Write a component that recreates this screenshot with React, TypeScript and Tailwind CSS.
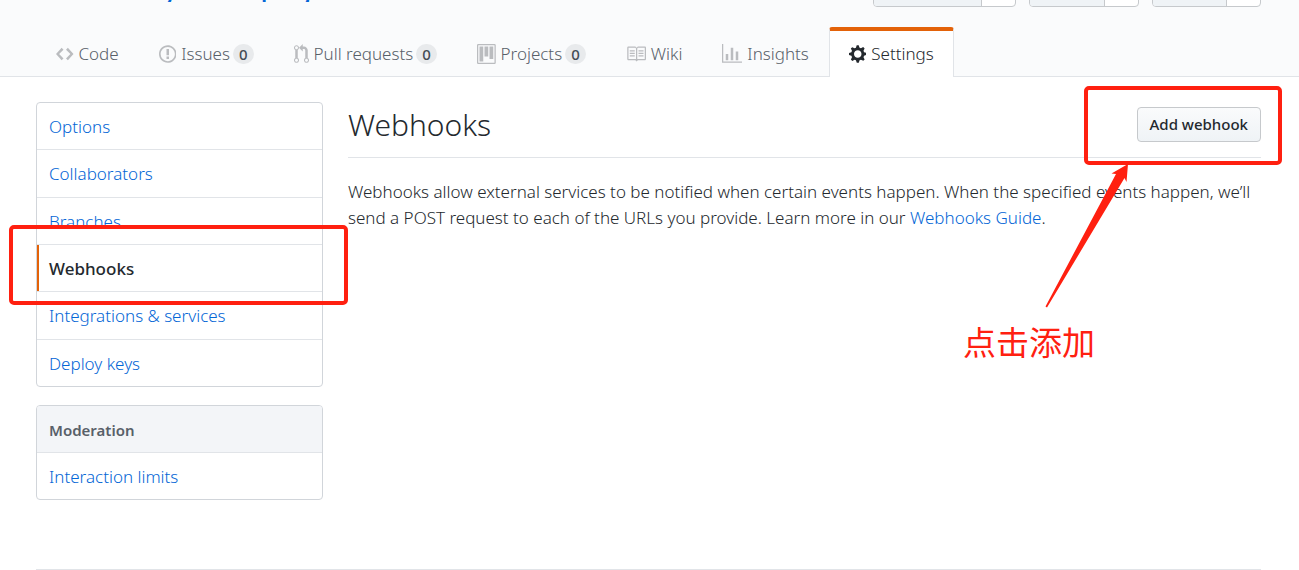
import clsx from "clsx";

const icons = {
  code: {
    width: 14,
    path: "M9.5 3L8 4.5 11.5 8 8 11.5 9.5 13 14 8 9.5 3zm-5 0L0 8l4.5 5L6 11.5 2.5 8 6 4.5 4.5 3z",
  },
  issue: {
    width: 14,
    path: "M7 2.3c3.14 0 5.7 2.56 5.7 5.7s-2.56 5.7-5.7 5.7A5.71 5.71 0 0 1 1.3 8c0-3.14 2.56-5.7 5.7-5.7zM7 1C3.14 1 0 4.14 0 8s3.14 7 7 7 7-3.14 7-7-3.14-7-7-7zm1 3H6v5h2V4zm0 6H6v2h2v-2z",
  },
  pull: {
    width: 12,
    path: "M11 11.28V5c-.03-.78-.34-1.47-.94-2.06C9.46 2.35 8.78 2.03 8 2H7V0L4 3l3 3V4h1c.27.02.48.11.69.31.21.2.3.42.31.69v6.28A1.993 1.993 0 0 0 10 15a1.993 1.993 0 0 0 1-3.72zm-1 2.92c-.66 0-1.2-.55-1.2-1.2 0-.65.55-1.2 1.2-1.2.65 0 1.2.55 1.2 1.2 0 .65-.55 1.2-1.2 1.2zM4 3c0-1.11-.89-2-2-2a1.993 1.993 0 0 0-1 3.72v6.56A1.993 1.993 0 0 0 2 15a1.993 1.993 0 0 0 1-3.72V4.72c.59-.34 1-.98 1-1.72zm-.8 10c0 .66-.55 1.2-1.2 1.2-.65 0-1.2-.55-1.2-1.2 0-.65.55-1.2 1.2-1.2.65 0 1.2.55 1.2 1.2zM2 4.2C1.34 4.2.8 3.65.8 3c0-.65.55-1.2 1.2-1.2.65 0 1.2.55 1.2 1.2 0 .65-.55 1.2-1.2 1.2z",
  },
  project: {
    width: 15,
    path: "M10 12h3V2h-3v10zm-4-2h3V2H6v8zm-4 4h3V2H2v12zm-1 1h13V1H1v14zM14 0H1a1 1 0 0 0-1 1v14a1 1 0 0 0 1 1h13a1 1 0 0 0 1-1V1a1 1 0 0 0-1-1z",
  },
  book: {
    width: 16,
    path: "M3 5h4v1H3V5zm0 3h4V7H3v1zm0 2h4V9H3v1zm11-5h-4v1h4V5zm0 2h-4v1h4V7zm0 2h-4v1h4V9zm2-6v9c0 .55-.45 1-1 1H9.5l-1 1-1-1H2c-.55 0-1-.45-1-1V3c0-.55.45-1 1-1h5.5l1 1 1-1H15c.55 0 1 .45 1 1zm-8 .5L7.5 3H2v9h6V3.5zm7-.5H9.5l-.5.5V12h6V3z",
  },
  graph: {
    width: 16,
    path: "M16 14v1H0V0h1v14h15zM5 13H3V8h2v5zm4 0H7V3h2v10zm4 0h-2V6h2v7z",
  },
  gear: {
    width: 14,
    path: "M14 8.77v-1.6l-1.94-.64-.45-1.09.88-1.84-1.13-1.13-1.81.91-1.09-.45-.69-1.92h-1.6l-.63 1.94-1.11.45-1.84-.88-1.13 1.13.91 1.81-.45 1.09L0 7.23v1.59l1.94.64.45 1.09-.88 1.84 1.13 1.13 1.81-.91 1.09.45.69 1.92h1.59l.63-1.94 1.11-.45 1.84.88 1.13-1.13-.92-1.81.47-1.09L14 8.75v.02zM7 11c-1.66 0-3-1.34-3-3s1.34-3 3-3 3 1.34 3 3-1.34 3-3 3z",
  },
};

type IconName = keyof typeof icons;

const tabs: { icon: IconName; text: string; count?: number; selected?: boolean }[] = [
  { icon: "code", text: "Code" },
  { icon: "issue", text: "Issues", count: 0 },
  { icon: "pull", text: "Pull requests", count: 0 },
  { icon: "project", text: "Projects", count: 0 },
  { icon: "book", text: "Wiki" },
  { icon: "graph", text: "Insights" },
  { icon: "gear", text: "Settings", selected: true },
];

const settings = [
  "Options",
  "Collaborators",
  "Branches",
  "Webhooks",
  "Integrations & services",
  "Deploy keys",
];

const Icon = ({ name, className }: { name: IconName; className?: string }) => (
  <svg
    viewBox={`0 0 ${icons[name].width} 16`}
    className={clsx("h-5 w-auto shrink-0 fill-current", className)}
    aria-hidden="true"
  >
    <path fillRule="evenodd" d={icons[name].path} />
  </svg>
);

const SocialButton = ({ label }: { label: string }) => (
  <div className="flex h-[34px] rounded-[4px] border border-[#c6c9cc] bg-white">
    <div className={clsx("rounded-l-[3px] border-r border-[#c6c9cc] bg-[#eff3f6]", label)} />
    <div className="w-[33px]" />
  </div>
);

const Header = () => (
  <header className="border-b border-[#e1e4e8] bg-[#fafbfc] pr-[38px] pl-9">
    <div className="flex h-[27px] items-start justify-between">
      <a
        href="#"
        className="ml-32 flex h-[2px] items-end overflow-hidden text-[22px] leading-[22px] font-semibold text-[#0366d6]"
      >
        <span className="w-[97px]">y</span>
        <span className="w-9">p</span>
        <span>g</span>
      </a>
      <div className="flex h-[7px] items-end gap-[13px]">
        <SocialButton label="w-[108px]" />
        <SocialButton label="w-[75px]" />
        <SocialButton label="w-[74px]" />
      </div>
    </div>
    <nav className="-mb-px flex h-[50px]">
      {tabs.map((tab) => (
        <a
          href="#"
          key={tab.text}
          className={clsx(
            "flex items-center rounded-t-[3px] border-x border-t-4 px-[19px] whitespace-nowrap",
            tab.selected
              ? "border-x-[#e1e4e8] border-t-[#e36209] bg-white text-[#24292e]"
              : "border-transparent text-[#586069]"
          )}
        >
          <Icon name={tab.icon} className={clsx("mr-[5px]", !tab.selected && "text-[#babcbf]")} />
          {tab.text}
          {tab.count !== undefined && (
            <span className="ml-[3px] rounded-full bg-[#e8eaec] px-[6px] text-[15px] leading-5 font-medium text-[#444d56]">
              {tab.count}
            </span>
          )}
        </a>
      ))}
    </nav>
  </header>
);

const Sidebar = () => (
  <aside className="w-[287px] shrink-0">
    <nav className="flex min-h-[285px] flex-col divide-y divide-[#e1e4e8] rounded-[4px] border border-[#d1d5da]">
      {settings.map((item) => (
        <a
          href="#"
          key={item}
          className={clsx(
            "relative flex flex-1 items-center px-3 pt-[2px]",
            item === "Webhooks" ? "font-medium text-[#24292e]" : "text-[#0366d6]"
          )}
        >
          {item}
          {item === "Webhooks" && (
            <>
              <span className="absolute inset-y-0 left-0 w-[2px] bg-[#e36209]" />
              <span className="absolute -top-5 -right-[26px] -bottom-[14px] -left-7 z-10 rounded-[5px] border-4 border-[#ff2010]" />
            </>
          )}
        </a>
      ))}
    </nav>
    <nav className="mt-[18px] rounded-[4px] border border-[#d1d5da]">
      <h3 className="rounded-t-[3px] border-b border-[#e1e4e8] bg-[#f3f5f8] px-3 pt-[11px] pb-[9px] text-[15px] leading-[26px] font-semibold text-[#586069]">
        Moderation
      </h3>
      <a href="#" className="block px-3 pt-[11px] pb-[9px] leading-[26px] text-[#0366d6]">
        Interaction limits
      </a>
    </nav>
  </aside>
);

const AddWebhook = () => (
  <div className="relative">
    <button className="block h-[35px] rounded-[4px] border border-[#c6c9cc] bg-linear-to-b from-[#fafbfc] to-[#eff3f6] px-3 pb-[1px] text-[15px] font-medium">
      Add webhook
    </button>
    <span className="pointer-events-none absolute -top-[21px] -right-[21px] -bottom-[23px] -left-[53px] rounded-[5px] border-4 border-[#ff2010]" />
    <svg
      viewBox="0 0 86 146"
      className="pointer-events-none absolute top-14 right-[131px] h-[146px] w-[86px] fill-[#ff2010]"
      aria-hidden="true"
    >
      <path d="M84 1L67.5 10.5L72 11L1.5 143.5L3 144.5L80.5 15L82.5 19Z" />
    </svg>
    <p className="absolute top-[210px] right-[166px] font-['Noto_Sans_CJK_SC',sans-serif] text-[33px] leading-[48px] font-normal whitespace-nowrap text-[#ff2010]">
      点击添加
    </p>
  </div>
);

const App = () => {
  return (
    <div className="bg-white font-['Noto_Sans',sans-serif] text-[17px] leading-[26px] font-[350] text-[#24292e]">
      <Header />
      <main className="mr-[38px] ml-9 flex gap-[25px] border-b border-[#e1e4e8] pt-[25px] pb-[69px]">
        <Sidebar />
        <section className="flex-1">
          <div className="flex h-14 items-start justify-between border-b border-[#e1e4e8] pt-[5px]">
            <h2 className="text-[30px] leading-9">Webhooks</h2>
            <AddWebhook />
          </div>
          <p className="mt-[21px]">
            Webhooks allow external services to be notified when certain events happen. When the
            specified events happen, we’ll send a POST request to each of the URLs you provide.
            Learn more in our{" "}
            <a href="#" className="text-[#0366d6]">
              Webhooks Guide
            </a>
            .
          </p>
        </section>
      </main>
    </div>
  );
};

export default App;
